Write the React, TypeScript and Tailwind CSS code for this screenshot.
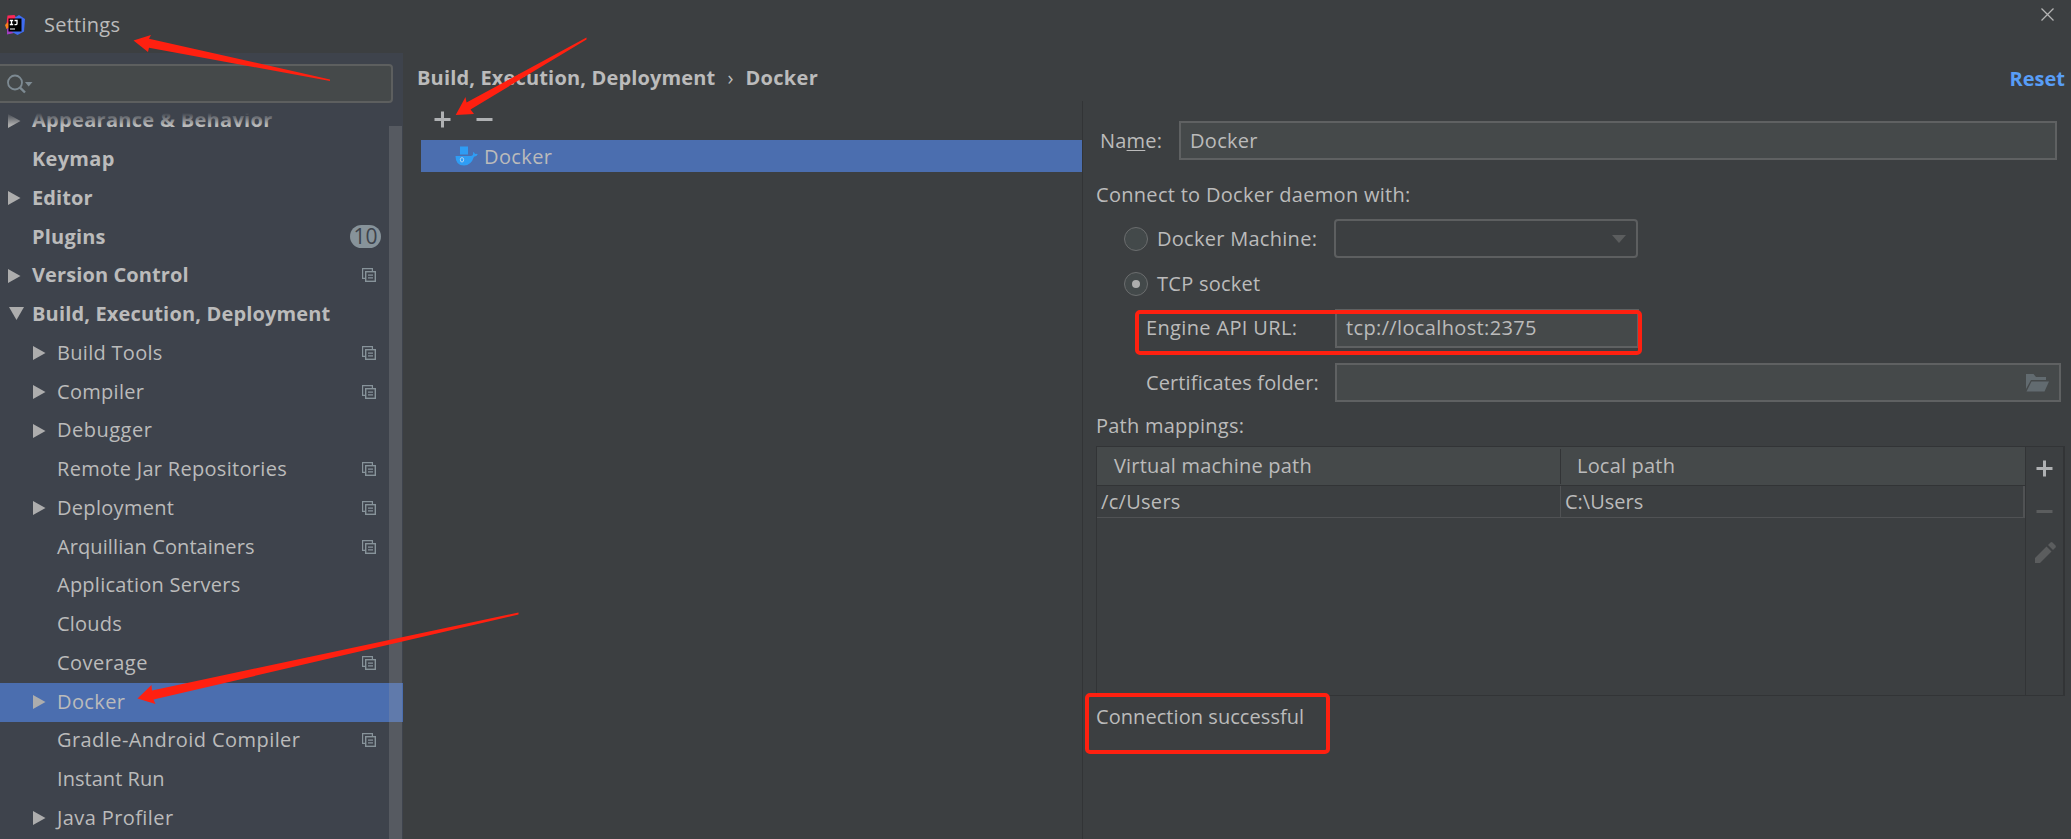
import React from "react";

type Item = { label: string; track: string; top?: boolean; arrow?: "right" | "down"; copy?: boolean; badge?: string; selected?: boolean };

const items: Item[] = [
  { label: "Appearance & Behavior", track: "tracking-[0.3px]", top: true, arrow: "right" },
  { label: "Keymap", track: "tracking-[0.3px]", top: true },
  { label: "Editor", track: "tracking-[0.1px]", top: true, arrow: "right" },
  { label: "Plugins", track: "tracking-[0.2px]", top: true, badge: "10" },
  { label: "Version Control", track: "tracking-[0.1px]", top: true, arrow: "right", copy: true },
  { label: "Build, Execution, Deployment", track: "tracking-[0.16px]", top: true, arrow: "down" },
  { label: "Build Tools", track: "tracking-[0.3px]", arrow: "right", copy: true },
  { label: "Compiler", track: "tracking-[0.3px]", arrow: "right", copy: true },
  { label: "Debugger", track: "tracking-[0.5px]", arrow: "right" },
  { label: "Remote Jar Repositories", track: "tracking-[0.3px]", copy: true },
  { label: "Deployment", track: "tracking-[0.3px]", arrow: "right", copy: true },
  { label: "Arquillian Containers", track: "tracking-[0.1px]", copy: true },
  { label: "Application Servers", track: "tracking-[0.24px]" },
  { label: "Clouds", track: "tracking-[0.2px]" },
  { label: "Coverage", track: "tracking-[0.45px]", copy: true },
  { label: "Docker", track: "tracking-[0.4px]", arrow: "right", selected: true },
  { label: "Gradle-Android Compiler", track: "tracking-[0.43px]", copy: true },
  { label: "Instant Run", track: "tracking-[0.05px]" },
  { label: "Java Profiler", track: "tracking-[0.4px]", arrow: "right" },
];

function Logo() {
  return (
    <svg width="20" height="20" viewBox="0 0 20 20" className="shrink-0">
      <path d="M2.500 0.500 9.500 0 12 4 5 12 1.500 9Z" fill="#fe2857" />
      <path d="M0 10 3 7 5 13 1.500 14Z" fill="#fc801d" />
      <path d="M2 14 6 11 9 18 2 19.500Z" fill="#a03fc0" />
      <path d="M10 2.500 14 0 20 4 19 16.500 12.500 20 7 17Z" fill="#3f6cf0" />
      <rect x="3.500" y="3.500" width="13" height="13" fill="#000" />
      <path d="M4.800 5.500h3.400M6.500 5.500v4M4.800 9.500h3.400M9.500 5.500h2.500v3q0 1.200-1.200 1.200h-1.300" stroke="#fff" strokeWidth="1.300" fill="none" />
      <rect x="5" y="13.500" width="5" height="1" fill="#fff" />
    </svg>
  );
}

function CopyIcon() {
  return (
    <svg width="14" height="14" viewBox="0 0 14 14" fill="none" stroke="#87939a" className="shrink-0">
      <path d="M3 10.400H.600V.600H10.400V3" strokeWidth="1.200" />
      <rect x="3.700" y="3.700" width="9.600" height="9.600" strokeWidth="1.400" />
      <path d="M6 7.200h5M6 9.800h5" strokeWidth="1.200" />
    </svg>
  );
}

function Expander({ dir }: { dir?: "right" | "down" }) {
  if (dir === "right")
    return (
      <svg width="13" height="14" viewBox="0 0 13 14">
        <path d="M0 0 12.500 7 0 14Z" fill="#adadad" />
      </svg>
    );
  if (dir === "down")
    return (
      <svg width="15" height="13" viewBox="0 0 15 13" className="ml-px -mt-0.5">
        <path d="M0 0H15L7.500 13Z" fill="#adadad" />
      </svg>
    );
  return null;
}

function Plus() {
  return (
    <svg width="17" height="17" viewBox="0 0 17 17" className="shrink-0">
      <path d="M8.500 0.500v16M0.500 8.500h16" stroke="#afb1b3" strokeWidth="3" />
    </svg>
  );
}

function Minus({ off }: { off?: boolean }) {
  return (
    <svg width="17" height="17" viewBox="0 0 17 17" className="shrink-0">
      <path d="M0.500 8.500h16" stroke={off ? "#5b5d5e" : "#afb1b3"} strokeWidth="3" />
    </svg>
  );
}

function Whale() {
  return (
    <svg width="23" height="20" viewBox="0 0 23 20" className="shrink-0">
      <rect x="5" y="0.500" width="8" height="8" fill="#2f9df4" />
      <path d="M0.500 10H15.500Q18.800 9.800 18 6Q19.500 6.500 20 8Q21.500 7.600 22.800 8.300Q21.800 10.500 19 10.700Q16 19.500 9 19.500Q0.500 19.500 0.500 10Z" fill="#2f9df4" />
      <ellipse cx="7" cy="13.800" rx="1.700" ry="2.200" fill="none" stroke="#b9d5f2" strokeWidth="0.900" />
    </svg>
  );
}

function Sidebar() {
  return (
    <aside className="flex w-[403px] shrink-0 flex-col bg-[#3e434c]">
      <div className="mt-[11px] -ml-1 flex h-[39px] w-[397px] shrink-0 items-center rounded-[4px] border-2 border-[#5d5f5f] bg-[#45494a] pl-[9px]">
        <svg width="26" height="20" viewBox="0 0 26 20" fill="none">
          <circle cx="8" cy="8.500" r="7" stroke="#7d8a92" strokeWidth="1.800" />
          <path d="M12.800 13.300 18 18.500" stroke="#7d8a92" strokeWidth="2.400" />
          <path d="M18 8h7.500L21.700 12.500Z" fill="#7d8a92" />
        </svg>
      </div>
      <div className="relative mt-[10px] flex min-h-0 grow overflow-hidden">
        <ul className="-mt-[11px] w-full">
          {items.map((it) => (
            <li key={it.label} className={`flex h-[38.75px] items-center ${it.selected ? "bg-[#4b6eaf]" : ""}`}>
              <span className={`flex shrink-0 items-center pb-px ${it.top ? "w-8 pl-2" : "w-[57px] pl-[33px]"}`}>
                <Expander dir={it.arrow} />
              </span>
              <span className={`grow pb-[3px] ${it.track} ${it.top ? "font-bold" : ""}`}>{it.label}</span>
              {it.copy && <span className="mr-[27px] pb-[2px]"><CopyIcon /></span>}
              {it.badge && (
                <span className="mr-[22px] mb-[2px] flex h-[23px] w-[31px] items-center justify-center rounded-full bg-[#87939a] pb-px text-[21px] text-[#3e434c]">{it.badge}</span>
              )}
            </li>
          ))}
        </ul>
        <div className="absolute inset-x-0 top-0 h-[12px] bg-gradient-to-b from-[#3e434c] to-transparent" />
        <div className="absolute top-[13px] right-px bottom-0 w-[13px] bg-[#a0a0a0]/25" />
      </div>
    </aside>
  );
}

const field = "border-2 border-[#5f6162] bg-[#45494a]";

function Radio({ on }: { on?: boolean }) {
  return (
    <span className="flex size-6 shrink-0 items-center justify-center rounded-full border-[1.500px] border-[#6b6d6e] bg-[#43494a]">
      {on && <span className="size-2 rounded-full bg-[#adadad]" />}
    </span>
  );
}

function DockerForm() {
  return (
    <section className="flex min-w-0 grow flex-col border-l border-[#323436]">
      <div className="mt-[20px] flex h-[39px] items-center pl-[17px]">
        <span className="w-[79px] pb-px tracking-[0.2px]">Na<span className="underline decoration-1 underline-offset-2">m</span>e:</span>
        <div className={`flex h-[39px] w-[878px] items-center pb-px pl-[9px] tracking-[0.3px] ${field}`}>Docker</div>
      </div>
      <div className="mt-[20px] h-[30px] pl-[13px] leading-[30px] tracking-[0.3px]">Connect to Docker daemon with:</div>
      <div className="mt-[9px] flex h-[39px] items-center pl-[41px]">
        <Radio />
        <span className="w-[186px] pb-px pl-[9px] tracking-[0.28px]">Docker Machine:</span>
        <div className="flex h-[39px] w-[304px] items-center justify-end rounded-[4px] border-2 border-[#5d5f60] pr-[10px]">
          <svg width="14" height="8" viewBox="0 0 14 8"><path d="M0 0H14L7 8Z" fill="#5b5d5e" /></svg>
        </div>
      </div>
      <div className="mt-[6px] flex h-[39px] items-center pl-[41px]">
        <Radio on />
        <span className="pb-px pl-[9px] tracking-[0.26px]">TCP socket</span>
      </div>
      <div className="mt-[6px] flex h-[39px] items-center pl-[63px]">
        <span className="w-[189px] pb-[2px] tracking-[0.35px]">Engine API URL:</span>
        <div className={`flex h-[39px] w-[304px] items-center pb-[2px] pl-[9px] tracking-[0.36px] ${field}`}>tcp://localhost:2375</div>
      </div>
      <div className="mt-[15px] flex h-[39px] items-center pl-[63px]">
        <span className="w-[189px] pb-px tracking-[0.12px]">Certificates folder:</span>
        <div className={`flex h-[39px] w-[726px] items-center justify-end pr-[10px] ${field}`}>
          <svg width="23" height="18" viewBox="0 0 23 18" fill="#626b70">
            <path d="M0 0H7.500L10 3H20V6H5L0 15Z" />
            <path d="M5.500 7.500H23L18.500 17.500H0.500Z" />
          </svg>
        </div>
      </div>
      <div className="mt-[9px] h-[30px] pl-[13px] leading-[30px] tracking-[0.24px]">Path mappings:</div>
      <div className="mt-[5px] ml-[13px] flex h-[250px] w-[969px] shrink-0 border border-r-2 border-[#323436]">
        <div className="flex grow flex-col">
          <div className="flex h-[39px] items-center border-b border-[#323436] bg-[#45494a]">
            <span className="flex h-[35px] w-[464px] items-center border-r border-[#323436] pb-[1px] pl-[17px] tracking-[0.2px]">Virtual machine path</span>
            <span className="pb-[1px] pl-[16px] tracking-[0.2px]">Local path</span>
          </div>
          <div className="flex h-[32px] border-r-2 border-b border-[#505254]">
            <span className="flex w-[464px] items-center border-r border-[#505254] pb-px pl-[4px] tracking-[0.3px]">/c/Users</span>
            <span className="flex items-center pb-px pl-[4px]">C:\Users</span>
          </div>
        </div>
        <div className="flex w-[38px] flex-col items-center border-l border-[#323436] pt-[13px]">
          <Plus />
          <span className="mt-[26px] flex"><Minus off /></span>
          <svg width="21" height="21" viewBox="0 0 21 21" fill="#5b5d5e" className="mt-[22px] ml-[2px]">
            <path d="M0 16 11.500 4.500 16.500 9.500 5 21H0Z" />
            <path d="M13 3 15.500 .500Q16.500 -.300 17.500 .500L20.500 3.500Q21.200 4.500 20.500 5.500L18 8Z" />
          </svg>
        </div>
      </div>
      <div className="mt-[6px] h-[30px] pl-[13px] leading-[30px] tracking-[0.06px]">Connection successful</div>
    </section>
  );
}

export default function App() {
  return (
    <div className="relative flex h-[839px] w-[2071px] flex-col overflow-hidden bg-[#3c3f41] font-['Open_Sans','Noto_Sans',sans-serif] text-[20px] leading-[27px] whitespace-nowrap text-[#bbbbbb]">
      <header className="flex h-[53px] shrink-0 items-start justify-between pt-[8px] pr-[17px] pl-[5px]">
        <div className="flex h-[34px] items-center gap-[19px]">
          <Logo />
          <span className="pb-px tracking-[0.25px]">Settings</span>
        </div>
        <svg width="13" height="13" viewBox="0 0 13 13"><path d="M.500 .500 12.500 12.500M12.500 .500 .500 12.500" stroke="#b4b4b4" strokeWidth="1.300" /></svg>
      </header>
      <div className="flex min-h-0 grow">
        <Sidebar />
        <main className="flex min-w-0 grow flex-col">
          <div className="flex h-[48px] shrink-0 items-center justify-between pr-[6px] pl-[14px] font-bold">
            <div className="flex items-center gap-[12px]">
              <span className="tracking-[0.16px]">Build, Execution, Deployment</span>
              <span className="font-normal">›</span>
              <span className="tracking-[0.3px]">Docker</span>
            </div>
            <span className="pt-[3px] text-[#589df6]">Reset</span>
          </div>
          <div className="flex min-h-0 grow">
            <div className="flex w-[679px] shrink-0 flex-col pl-[18px]">
              <div className="flex h-[39px] items-center gap-[25px] pb-[2px] pl-[13px]">
                <Plus />
                <Minus />
              </div>
              <div className="flex h-[32px] items-center gap-[6px] bg-[#4b6eaf] pl-[34px]">
                <Whale />
                <span className="tracking-[0.4px]">Docker</span>
              </div>
            </div>
            <DockerForm />
          </div>
        </main>
      </div>
      <div className="absolute top-[309.500px] left-[1134.500px] h-[45px] w-[507px] rounded-[5px] border-4 border-[#ff2010]" />
      <div className="absolute top-[693px] left-[1085px] h-[61px] w-[245px] rounded-[5px] border-4 border-[#ff2010]" />
      <svg className="pointer-events-none absolute inset-0" width="2071" height="839" viewBox="0 0 2071 839" fill="#ff2010">
        <path d="M133.500 40.500 151 35 149 38.700 330 79.500V81L149 47.700 148 52Z" />
        <path d="M455.700 115 465.500 97 466.500 102.500 586.500 37.500V39.500L470.500 109.500 474 114Z" />
        <path d="M137.500 698.500 151.500 685 152 690.500 518.500 612.500V614.500L153.500 699.500 155.500 704Z" />
      </svg>
    </div>
  );
}
